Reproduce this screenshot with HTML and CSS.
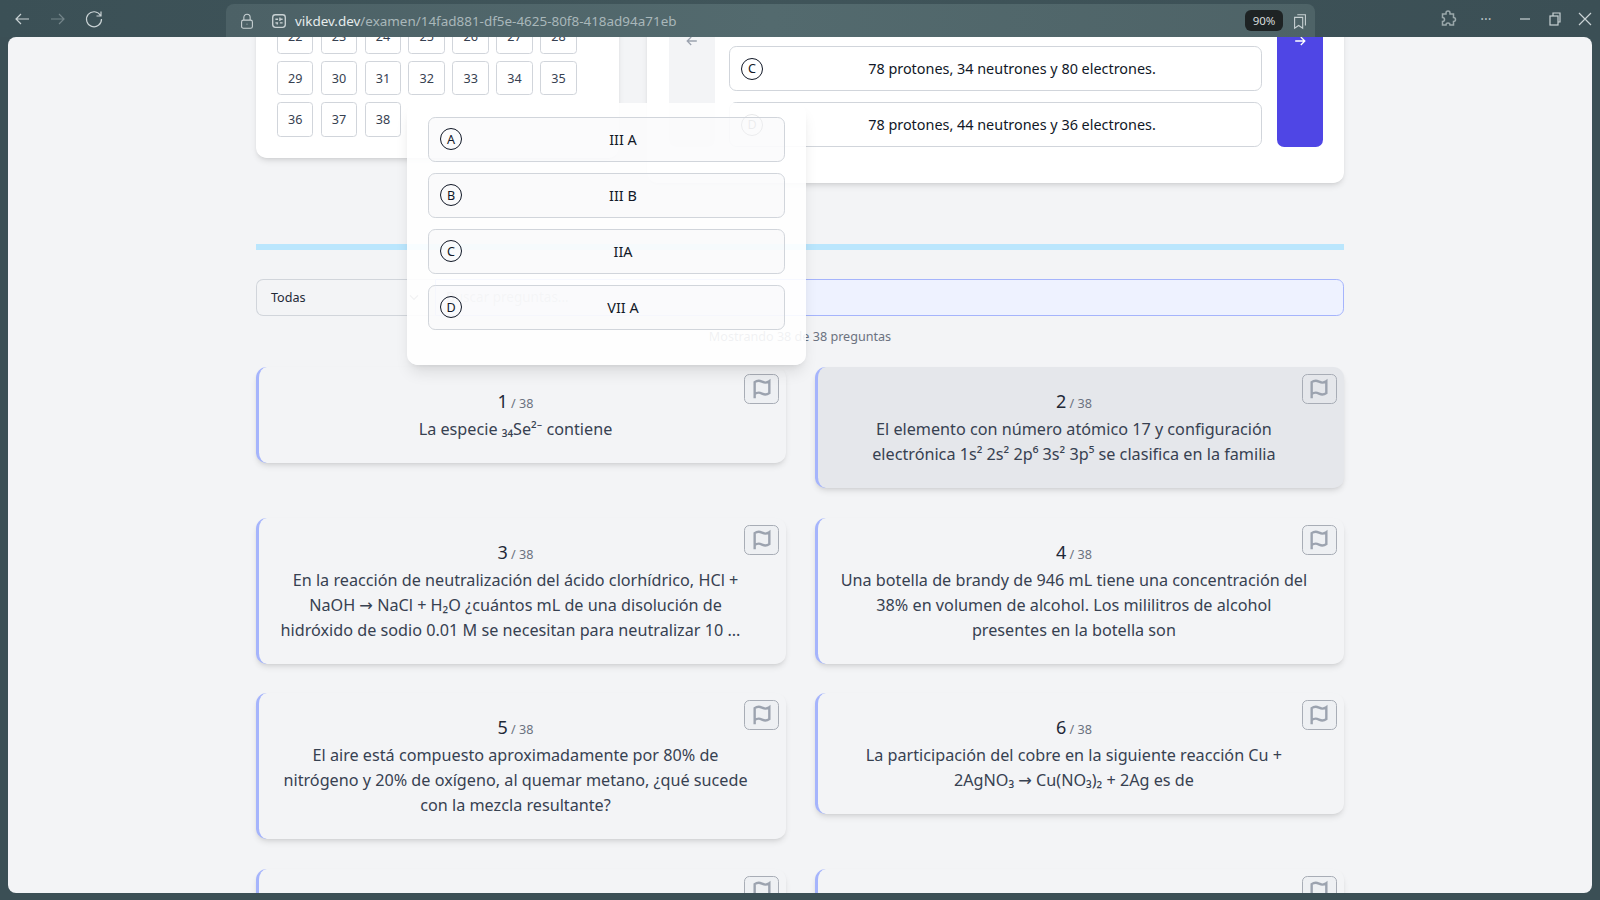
FILE: index.html
```html
<!DOCTYPE html>
<html lang="es">
<head>
    <meta charset="UTF-8">
    <title>Examen</title>
    <link rel="stylesheet" href="styles.css">
</head>
<body>
    <div class="chrome">
        <div class="nav-icons">
            <svg class="ico" viewBox="0 0 20 20"><path d="M17 10H4M9 5l-5 5 5 5"/></svg>
            <svg class="ico dim" viewBox="0 0 20 20"><path d="M3 10h13M11 5l5 5-5 5"/></svg>
            <svg class="ico" viewBox="0 0 20 20"><path d="M16.500 6.500A7.500 7.500 0 1 0 17.500 10M17 2.500v4.500h-4.500"/></svg>
        </div>
        <div class="urlbar">
            <svg class="ico small" viewBox="0 0 20 20"><rect x="4" y="9" width="12" height="9" rx="2"/><path d="M6.500 9V6a3.500 3.500 0 0 1 7 0v3M10 13v1"/></svg>
            <svg class="ico small site" viewBox="0 0 20 20"><rect x="3" y="3" width="14" height="14" rx="3"/><path d="M6 8h3M11 6v4M11 8h3M6 12h3M8 12v2M11 12h3"/></svg>
            <span class="url"><b>vikdev.dev</b>/examen/14fad881-df5e-4625-80f8-418ad94a71eb</span>
            <span class="zoom-chip">90%</span>
            <svg class="ico small bookmarks" viewBox="0 0 20 20"><path d="M4 6h9v12l-4.500-3L4 18zM7 3h9v12"/></svg>
        </div>
        <div class="win-icons">
            <svg class="ico puzzle" viewBox="0 0 20 20"><path d="M8 4a2 2 0 0 1 4 0v1h3.500v3.500a2 2 0 0 1 0 4V16h-3.500a2 2 0 0 0-4 0H4.500v-3.500a2 2 0 0 0 0-4V5H8z"/></svg>
            <span class="dots">···</span>
            <svg class="ico min" viewBox="0 0 20 20"><path d="M5 10h10"/></svg>
            <svg class="ico max" viewBox="0 0 20 20"><rect x="5" y="7" width="8" height="9"/><path d="M8 7V4h7v9h-2"/></svg>
            <svg class="ico close" viewBox="0 0 20 20"><path d="M4 4l12 12M16 4L4 16"/></svg>
        </div>
    </div>

    <div class="viewport">
        <div class="page">
            <div class="exam-top">
                <div class="card sidebar">
                    <div class="num-grid" id="numGrid"></div>
                </div>
                <div class="card exam-main">
                    <button class="side-btn prev">
                        <svg class="arrow" viewBox="0 0 20 20"><path d="M16 10H4M9 5l-5 5 5 5"/></svg>
                    </button>
                    <div class="options">
                        <div class="option"><span class="letter">A</span><span class="option-text">78 protones, 34 neutrones y 34 electrones.</span></div>
                        <div class="option"><span class="letter">B</span><span class="option-text">34 protones, 44 neutrones y 36 electrones.</span></div>
                        <div class="option"><span class="letter">C</span><span class="option-text">78 protones, 34 neutrones y 80 electrones.</span></div>
                        <div class="option"><span class="letter">D</span><span class="option-text">78 protones, 44 neutrones y 36 electrones.</span></div>
                    </div>
                    <button class="side-btn next">
                        <svg class="arrow" viewBox="0 0 20 20"><path d="M4 10h12M11 5l5 5-5 5"/></svg>
                    </button>
                </div>
            </div>

            <div class="progress-bar"></div>

            <div class="filters">
                <div class="filter-select">
                    <span>Todas</span>
                    <svg class="chevron" viewBox="0 0 20 20"><path d="M5 8l5 5 5-5"/></svg>
                </div>
                <input class="search" type="text" placeholder="Buscar preguntas...">
            </div>
            <p class="count">Mostrando 38 de 38 preguntas</p>

            <div class="questions">
                <div class="q-card">
                    <button class="flag"><svg viewBox="0 0 24 24"><use href="#flag"/></svg></button>
                    <div class="q-num">1<small> / 38</small></div>
                    <p class="q-text">La especie ₃₄Se²⁻ contiene</p>
                </div>
                <div class="q-card active">
                    <button class="flag"><svg viewBox="0 0 24 24"><use href="#flag"/></svg></button>
                    <div class="q-num">2<small> / 38</small></div>
                    <p class="q-text">El elemento con número atómico 17 y configuración electrónica 1s² 2s² 2p⁶ 3s² 3p⁵ se clasifica en la familia</p>
                </div>
                <div class="q-card">
                    <button class="flag"><svg viewBox="0 0 24 24"><use href="#flag"/></svg></button>
                    <div class="q-num">3<small> / 38</small></div>
                    <p class="q-text">En la reacción de neutralización del ácido clorhídrico, HCl + NaOH → NaCl + H₂O ¿cuántos mL de una disolución de <span class="q-last">hidróxido de sodio 0.01 M se necesitan para neutralizar 10 ...</span></p>
                </div>
                <div class="q-card">
                    <button class="flag"><svg viewBox="0 0 24 24"><use href="#flag"/></svg></button>
                    <div class="q-num">4<small> / 38</small></div>
                    <p class="q-text">Una botella de brandy de 946 mL tiene una concentración del 38% en volumen de alcohol. Los mililitros de alcohol presentes en la botella son</p>
                </div>
                <div class="q-card">
                    <button class="flag"><svg viewBox="0 0 24 24"><use href="#flag"/></svg></button>
                    <div class="q-num">5<small> / 38</small></div>
                    <p class="q-text">El aire está compuesto aproximadamente por 80% de nitrógeno y 20% de oxígeno, al quemar metano, ¿qué sucede con la mezcla resultante?</p>
                </div>
                <div class="q-card">
                    <button class="flag"><svg viewBox="0 0 24 24"><use href="#flag"/></svg></button>
                    <div class="q-num">6<small> / 38</small></div>
                    <p class="q-text">La participación del cobre en la siguiente reacción Cu + 2AgNO₃ → Cu(NO₃)₂ + 2Ag es de</p>
                </div>
                <div class="q-card">
                    <button class="flag"><svg viewBox="0 0 24 24"><use href="#flag"/></svg></button>
                    <div class="q-num">7<small> / 38</small></div>
                </div>
                <div class="q-card">
                    <button class="flag"><svg viewBox="0 0 24 24"><use href="#flag"/></svg></button>
                    <div class="q-num">8<small> / 38</small></div>
                </div>
            </div>
        </div>

        <div class="preview">
            <div class="option"><span class="letter">A</span><span class="option-text">III A</span></div>
            <div class="option"><span class="letter">B</span><span class="option-text">III B</span></div>
            <div class="option"><span class="letter">C</span><span class="option-text">IIA</span></div>
            <div class="option"><span class="letter">D</span><span class="option-text">VII A</span></div>
        </div>
    </div>

    <svg class="defs" width="0" height="0">
        <symbol id="flag" viewBox="0 0 24 24">
            <path d="M4 22V4.500s2-1.500 4.500-1.500 4.500 2 7 2 4.500-1.500 4.500-1.500v13s-2 1.500-4.500 1.500-4.500-2-7-2S4 17.500 4 17.500"/>
        </symbol>
    </svg>

    <script>
        const grid = document.getElementById('numGrid');
        for (let i = 1; i <= 38; i++) {
            const cell = document.createElement('div');
            cell.className = 'num-cell';
            cell.textContent = i;
            grid.appendChild(cell);
        }
    </script>
</body>
</html>
```
FILE: styles.css
```css
* {
    box-sizing: border-box;
}

html, body {
    height: 100%;
}

body {
    margin: 0;
    display: flex;
    flex-direction: column;
    background-color: #3b4f55;
    font-family: 'Noto Sans', 'DejaVu Sans', sans-serif;
    overflow: hidden;
}

.defs {
    position: absolute;
}

/* browser chrome */
.chrome {
    height: 37px;
    flex-shrink: 0;
    display: flex;
    align-items: flex-end;
    background: linear-gradient(90deg, #3b5056, #40555a 40%, #3b4f55);
    color: #dfe5e6;
}

.ico {
    width: 20px;
    height: 20px;
    fill: none;
    stroke: #c9d2d4;
    stroke-width: 1.2;
}

.ico.dim {
    stroke: #74858a;
}

.ico.small {
    width: 18px;
    height: 18px;
}

.nav-icons {
    width: 226px;
    height: 37px;
    padding-left: 12px;
    display: flex;
    align-items: center;
    gap: 16px;
}

.urlbar {
    width: 1089px;
    height: 33px;
    padding: 0 6px 0 12px;
    display: flex;
    align-items: center;
    border-radius: 8px 8px 0 0;
    background: linear-gradient(90deg, #4c6166, #536a6e 50%, #4e6367);
    font-size: 13.45px;
}

.urlbar .site {
    margin-left: 14px;
    stroke-width: 1.5;
}

.url {
    margin-left: 7px;
    flex: 1;
    color: #a9b7ba;
}

.url b {
    font-weight: 400;
    color: #e6ebec;
}

.zoom-chip {
    width: 38px;
    height: 21px;
    border-radius: 6px;
    background-color: #1e2324;
    color: #d8dcdc;
    font-size: 11.5px;
    line-height: 21px;
    text-align: center;
}

.bookmarks {
    margin-left: 8px;
}

.win-icons {
    flex: 1;
    height: 37px;
    display: flex;
    align-items: center;
}

.puzzle {
    margin-left: 123px;
    stroke: #9aa8ab;
    stroke-width: 1.5;
}

.dots {
    margin-left: 18px;
    width: 20px;
    text-align: center;
    font-size: 14px;
    color: #b7c1c3;
}

.min {
    margin-left: 19px;
}

.max {
    margin-left: 10px;
}

.close {
    margin-left: 10px;
}

/* page */
.viewport {
    position: relative;
    flex: 1;
    min-height: 0;
    margin: 0 8px 7px;
    border-radius: 8px;
    overflow: hidden;
    background-color: #f3f4f6;
}

.page {
    margin-top: -187px;
    padding: 0 248px;
}

.exam-top {
    display: grid;
    grid-template-columns: 363px 697px;
    gap: 28px;
    align-items: start;
}

.card {
    background-color: #fff;
    border-radius: 10.8px;
    box-shadow: 0 4px 6px -1px rgba(0, 0, 0, 0.1), 0 2px 4px -2px rgba(0, 0, 0, 0.1);
}

.sidebar {
    padding: 45.6px 21px 21.6px 20.8px;
}

.num-grid {
    display: grid;
    grid-template-columns: repeat(7, 36.7px);
    grid-auto-rows: 34.2px;
    gap: 7.2px;
}

.num-cell {
    display: flex;
    align-items: center;
    justify-content: center;
    border: 1px solid #d1d5db;
    border-radius: 3.6px;
    font-size: 12.6px;
    color: #374151;
}

.exam-main {
    display: flex;
    gap: 14.6px;
    padding: 84.4px 21.4px 35.8px 21.6px;
}

.side-btn {
    width: 46px;
    flex-shrink: 0;
    display: flex;
    align-items: center;
    justify-content: center;
    padding: 0;
    border: none;
    border-radius: 7.2px;
}

.side-btn.prev {
    background-color: #f3f4f6;
}

.side-btn.next {
    background-color: #4f46e5;
}

.arrow {
    width: 16px;
    height: 16px;
    fill: none;
    stroke-width: 1.6;
}

.prev .arrow {
    stroke: #9ca3af;
}

.next .arrow {
    stroke: #fff;
}

.options {
    flex: 1;
    display: flex;
    flex-direction: column;
    gap: 11.2px;
}

.option {
    height: 44.8px;
    padding: 0 10.8px;
    display: flex;
    align-items: center;
    gap: 10.8px;
    border: 1px solid #d1d5db;
    border-radius: 7.2px;
    font-size: 14.4px;
    color: #111827;
}

.letter {
    width: 22px;
    height: 22px;
    flex-shrink: 0;
    display: flex;
    align-items: center;
    justify-content: center;
    border: 1px solid #111827;
    border-radius: 50%;
    font-size: 12.6px;
}

.option-text {
    flex: 1;
    text-align: center;
}

.progress-bar {
    height: 6px;
    margin-top: 61px;
    background-color: #bae6fd;
}

.filters {
    display: flex;
    height: 37px;
    margin-top: 29px;
}

.filter-select {
    width: 179px;
    padding: 0 13px 0 14px;
    display: flex;
    align-items: center;
    justify-content: space-between;
    border: 1px solid #d1d5db;
    border-right: none;
    border-radius: 7.2px 0 0 7.2px;
    font-size: 12.6px;
    color: #1f2937;
}

.chevron {
    width: 16px;
    height: 16px;
    fill: none;
    stroke: #6b7280;
    stroke-width: 1.5;
}

.search {
    flex: 1;
    padding: 0 10px;
    border: 1px solid #a5b4fc;
    border-radius: 0 7.2px 7.2px 0;
    background-color: #eef2ff;
    font-family: inherit;
    font-size: 13.5px;
}

.search::placeholder {
    color: #9ca3af;
}

.count {
    margin: 12px 0 21px;
    font-size: 12.6px;
    line-height: 18px;
    text-align: center;
    color: #6b7280;
}

.questions {
    display: grid;
    grid-template-columns: 1fr 1fr;
    gap: 29.6px 28.8px;
    align-items: start;
}

.q-card {
    position: relative;
    padding: 22px 36px 21px 21.6px;
    border-left: 3px solid #a5b4fc;
    border-radius: 10.8px;
    background-color: #f3f4f6;
    box-shadow: 0 4px 6px -1px rgba(0, 0, 0, 0.1), 0 2px 4px -2px rgba(0, 0, 0, 0.1);
    text-align: center;
}

.q-card.active {
    background-color: #e5e7eb;
}

.flag {
    position: absolute;
    top: 7px;
    right: 7px;
    width: 35.5px;
    height: 30px;
    padding: 0;
    display: flex;
    align-items: center;
    justify-content: center;
    border: 1px solid #a8adb6;
    border-radius: 5.4px;
    background-color: rgba(229, 231, 235, 0.3);
}

.flag svg {
    width: 22px;
    height: 22px;
    fill: none;
    stroke: #9ca3af;
    stroke-width: 2.6;
}

.q-num {
    margin-bottom: 3px;
    font-size: 18px;
    line-height: 25px;
    color: #1f2937;
}

.q-num small {
    font-size: 12.6px;
    line-height: 1;
    color: #6b7280;
}

.q-text {
    margin: 0;
    font-size: 16.2px;
    line-height: 25px;
    color: #374151;
}

.q-last {
    display: block;
    margin-right: 10px;
    white-space: nowrap;
}

/* hover preview of a question */
.preview {
    position: absolute;
    left: 398.6px;
    top: 65.5px;
    width: 399.4px;
    height: 262.5px;
    padding: 14.4px 21px 14.4px 21.6px;
    display: flex;
    flex-direction: column;
    gap: 11.2px;
    border-radius: 10.8px;
    background-color: rgba(255, 255, 255, 0.9);
    box-shadow: 0 10px 15px -3px rgba(0, 0, 0, 0.1), 0 4px 6px -4px rgba(0, 0, 0, 0.1);
}

.preview .option {
    background-color: rgba(243, 244, 246, 0.35);
}
```
